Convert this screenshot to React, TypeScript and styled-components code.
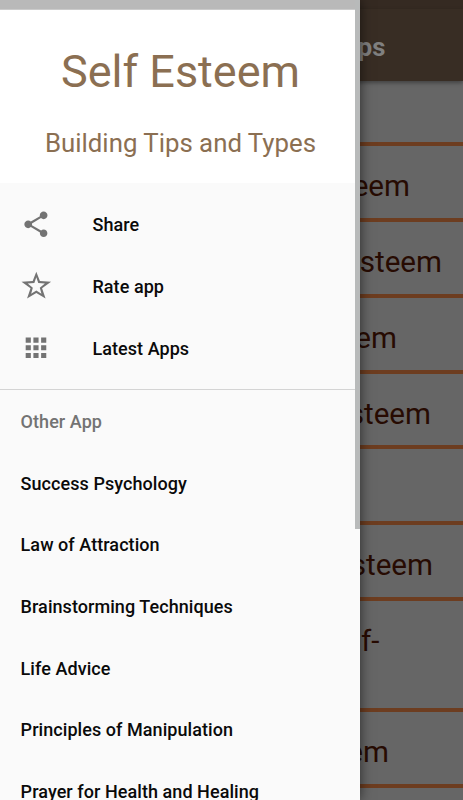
import React from "react";
import styled, { createGlobalStyle } from "styled-components";

const Global = createGlobalStyle`
  * { box-sizing: border-box; }
  body { margin: 0; overflow: hidden; font-family: Roboto, "Noto Sans", sans-serif; }
`;

const Screen = styled.div`
  position: relative;
  width: 463px;
  height: 800px;
  overflow: hidden;
  background: #666;
`;

const Page = styled.main`
  display: flex;
  flex-direction: column;
`;

const PageStatus = styled.div`
  height: 9px;
  background: #352a22;
`;

const Toolbar = styled.header`
  display: flex;
  align-items: center;
  justify-content: flex-end;
  height: 72px;
  padding: 4px 77.5px 0 0;
  background: #382d24;
  box-shadow: 0 2px 4px rgba(0, 0, 0, 0.35);
  color: #808080;
  font-size: 25.7px;
  font-weight: 700;
`;

const Topic = styled.div<{ $height: number; $end: number; $top?: boolean }>`
  display: flex;
  flex: none;
  justify-content: flex-end;
  align-items: ${(p) => (p.$top ? "flex-start" : "center")};
  height: ${(p) => p.$height}px;
  padding: ${(p) => (p.$top ? 20 : 8.5)}px ${(p) => p.$end}px 0 0;
  border-bottom: 4px solid #6d3d20;
  color: #270b02;
  font-size: 29.6px;
  line-height: 40px;
`;

const Drawer = styled.aside`
  position: absolute;
  top: 0;
  left: 0;
  display: flex;
  flex-direction: column;
  width: 360px;
  height: 800px;
  background: #fafafa;
  box-shadow: 0 0 12px rgba(0, 0, 0, 0.6);
`;

const DrawerStatus = styled.div`
  flex: none;
  height: 10px;
  background: #b9b9b9;
  border-bottom: 1px solid #cbcbcb;
`;

const Brand = styled.div`
  display: flex;
  flex: none;
  flex-direction: column;
  align-items: center;
  height: 173px;
  padding: 32px 0 0 1px;
  background: #fff;
  color: #8b6f52;
`;

const BrandName = styled.div`
  font-size: 45px;
  line-height: 60px;
`;

const Tagline = styled.div`
  margin-top: 24px;
  font-size: 25.8px;
  line-height: 34px;
`;

const Menu = styled.nav`
  display: flex;
  flex: none;
  flex-direction: column;
  height: 207px;
  padding-top: 11px;
  border-bottom: 1px solid #d4d4d4;
`;

const Links = styled.nav`
  display: flex;
  flex-direction: column;
  padding-top: 0.6px;
`;

const Item = styled.div<{ $muted?: boolean }>`
  display: flex;
  flex: none;
  align-items: center;
  gap: 41px;
  height: 61.7px;
  padding-left: 20.6px;
  color: ${(p) => (p.$muted ? "#737373" : "#0a0a0a")};
  font-size: 18px;
  font-weight: 500;
  letter-spacing: 0.06px;
  white-space: nowrap;
`;

const Icon = styled.svg`
  width: 30.86px;
  height: 30.86px;
  fill: #737373;
  fill-rule: evenodd;
  overflow: visible;
`;

const Scrollbar = styled.div`
  position: absolute;
  top: 0;
  right: 0;
  width: 5px;
  height: 529px;
  background: #b8baba;
`;

const actions = [
  { label: "Share", shift: "translate(-0.4 -0.1)", path: "M18 16.08c-.76 0-1.44.3-1.96.77L8.91 12.7c.05-.23.09-.46.09-.7s-.04-.47-.09-.7l7.05-4.11c.54.5 1.25.81 2.04.81 1.66 0 3-1.34 3-3s-1.34-3-3-3-3 1.34-3 3c0 .24.04.47.09.7L8.04 9.81C7.5 9.31 6.79 9 6 9c-1.66 0-3 1.34-3 3s1.34 3 3 3c.79 0 1.5-.31 2.04-.81l7.12 4.16c-.05.21-.08.43-.08.65 0 1.61 1.31 2.92 2.92 2.92 1.61 0 2.92-1.31 2.92-2.92s-1.31-2.92-2.92-2.92z" },
  { label: "Rate app", shift: "translate(-0.1 0)", path: "M12 .5L14.8 7.7L23.5 8.4L16.5 13.4L19.2 21.4L12 17.2L4.8 21.4L7.5 13.4L.5 8.4L9.2 7.7ZM12 4.8L13.5 9.3L18.7 9.8L14.7 13L16 17.7L12 15.2L8 17.7L9.3 13L5.3 9.8L10.5 9.3Z" },
  { label: "Latest Apps", shift: "translate(-0.35 -0.5)", path: "M4 8h4V4H4v4zm6 12h4v-4h-4v4zm-6 0h4v-4H4v4zm0-6h4v-4H4v4zm6 0h4v-4h-4v4zm6-10v4h4V4h-4zm-6 4h4V4h-4v4zm6 6h4v-4h-4v4zm0 6h4v-4h-4v4z" },
];

const otherApps = [
  "Success Psychology",
  "Law of Attraction",
  "Brainstorming Techniques",
  "Life Advice",
  "Principles of Manipulation",
  "Prayer for Health and Healing",
];

const topics = [
  { text: "", height: 65, end: 0 },
  { text: "Esteem", height: 76, end: 53 },
  { text: "Esteem", height: 76, end: 21 },
  { text: "Esteem", height: 75.5, end: 66 },
  { text: "Esteem", height: 75.5, end: 32 },
  { text: "", height: 76, end: 0 },
  { text: "Esteem", height: 76, end: 30 },
  { text: "Self-", height: 110.5, end: 83.5, top: true },
  { text: "Esteem", height: 76, end: 74 },
  { text: "", height: 76, end: 0 },
];

export default function App() {
  return (
    <Screen>
      <Global />
      <Page>
        <PageStatus />
        <Toolbar>Tips</Toolbar>
        {topics.map((t, i) => (
          <Topic key={i} $height={t.height} $end={t.end} $top={t.top}>{t.text}</Topic>
        ))}
      </Page>
      <Drawer>
        <DrawerStatus />
        <Brand>
          <BrandName>Self Esteem</BrandName>
          <Tagline>Building Tips and Types</Tagline>
        </Brand>
        <Menu>
          {actions.map((a) => (
            <Item key={a.label}>
              <Icon viewBox="0 0 24 24"><path d={a.path} transform={a.shift} /></Icon>
              {a.label}
            </Item>
          ))}
        </Menu>
        <Links>
          <Item $muted>Other App</Item>
          {otherApps.map((name) => <Item key={name}>{name}</Item>)}
        </Links>
        <Scrollbar />
      </Drawer>
    </Screen>
  );
}
